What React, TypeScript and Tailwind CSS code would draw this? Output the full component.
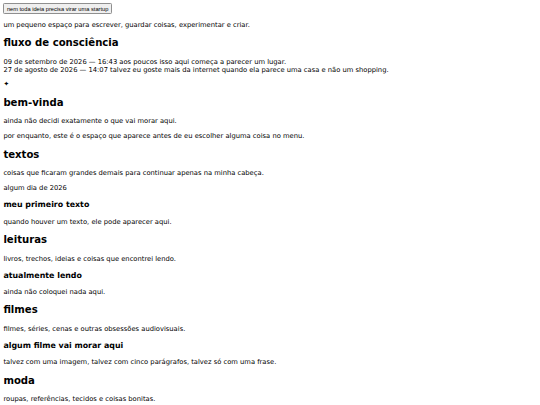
import React from 'react';

const Section: React.FC<{ title: string; children: React.ReactNode }> = ({ title, children }) => (
  <section>
    <h2 className="my-[8.4px] text-[10.125px] font-bold leading-[1.2]">{title}</h2>
    {children}
  </section>
);

const P: React.FC<{ children: React.ReactNode }> = ({ children }) => (
  <p className="my-[6.75px]">{children}</p>
);

const H3: React.FC<{ children: React.ReactNode }> = ({ children }) => (
  <h3 className="my-[7.9px] text-[7.9px] font-bold leading-[1.2]">{children}</h3>
);

export default function App() {
  return (
    <div className="min-h-screen bg-white p-[3.375px] font-['DejaVu_Sans',sans-serif] text-[6.75px] leading-[1.2] text-black">
      <div>
        <button
          type="button"
          className="rounded-[1.3px] border border-[#8f8f8f] bg-[#efefef] px-[2.5px] py-[1.2px] font-['Liberation_Sans',Arial,sans-serif] text-[5.7px] leading-[normal] text-black"
        >
          nem toda ideia precisa virar uma startup
        </button>
      </div>

      <P>um pequeno espaço para escrever, guardar coisas, experimentar e criar.</P>

      <Section title="fluxo de consciência">
        <div className="my-[6.75px]">
          <div>09 de setembro de 2026 — 16:43 aos poucos isso aqui começa a parecer um lugar.</div>
          <div>27 de agosto de 2026 — 14:07 talvez eu goste mais da internet quando ela parece uma casa e não um shopping.</div>
        </div>
      </Section>

      <P>✦</P>

      <Section title="bem-vinda">
        <P>ainda não decidi exatamente o que vai morar aqui.</P>
        <P>por enquanto, este é o espaço que aparece antes de eu escolher alguma coisa no menu.</P>
      </Section>

      <Section title="textos">
        <P>coisas que ficaram grandes demais para continuar apenas na minha cabeça.</P>
        <article>
          <P>algum dia de 2026</P>
          <H3>meu primeiro texto</H3>
          <P>quando houver um texto, ele pode aparecer aqui.</P>
        </article>
      </Section>

      <Section title="leituras">
        <P>livros, trechos, ideias e coisas que encontrei lendo.</P>
        <H3>atualmente lendo</H3>
        <P>ainda não coloquei nada aqui.</P>
      </Section>

      <Section title="filmes">
        <P>filmes, séries, cenas e outras obsessões audiovisuais.</P>
        <H3>algum filme vai morar aqui</H3>
        <P>talvez com uma imagem, talvez com cinco parágrafos, talvez só com uma frase.</P>
      </Section>

      <Section title="moda">
        <P>roupas, referências, tecidos e coisas bonitas.</P>
      </Section>
    </div>
  );
}
